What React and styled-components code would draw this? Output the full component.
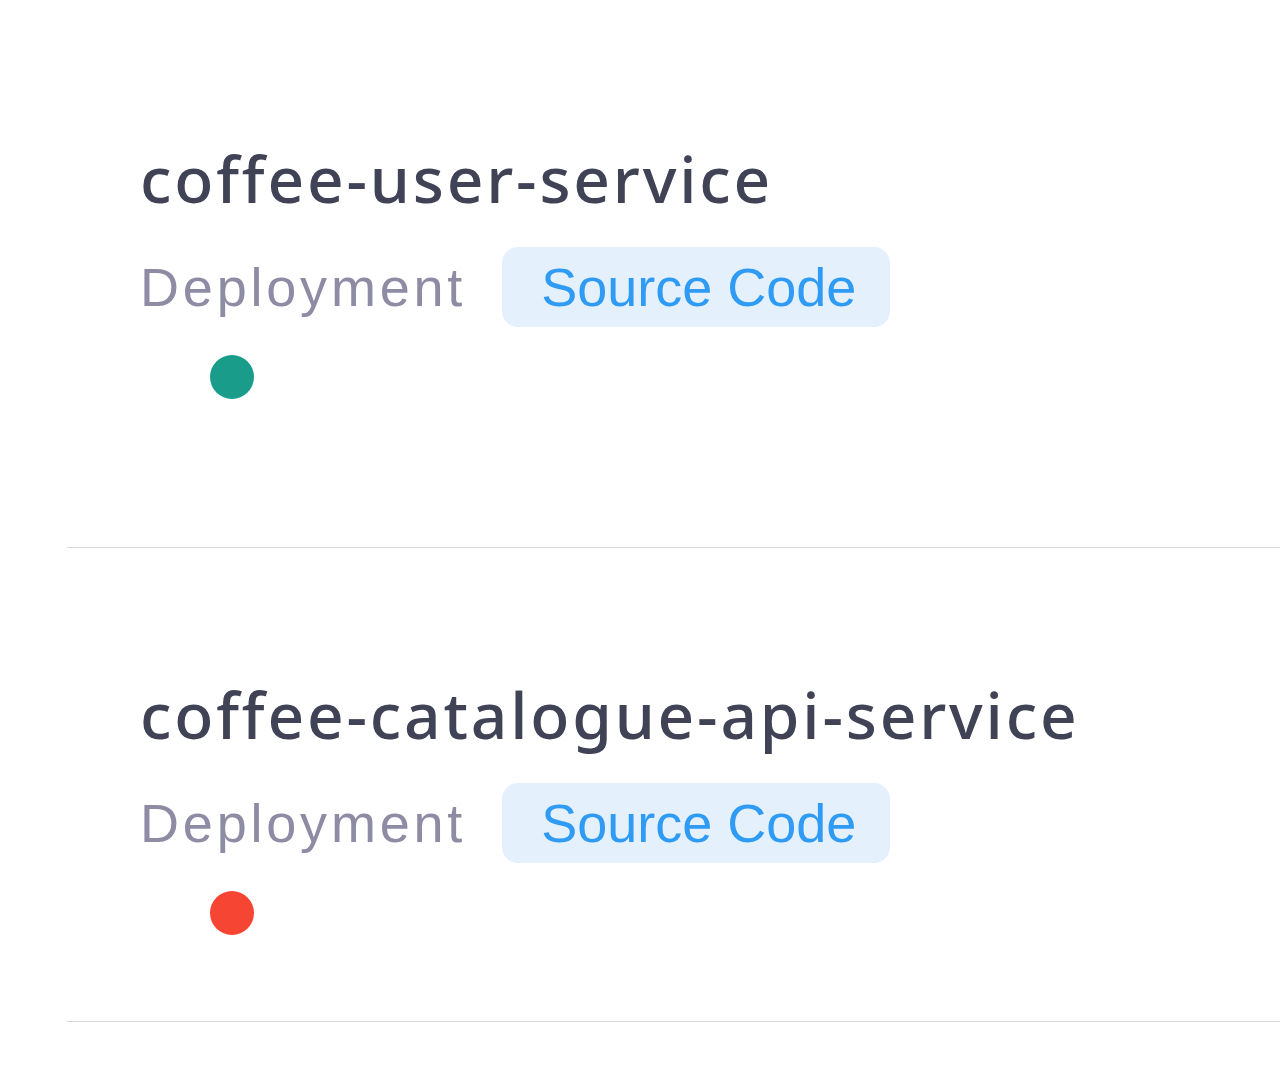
import React from "react";
import styled, { createGlobalStyle } from "styled-components";

const GlobalStyle = createGlobalStyle`
  body {
    margin: 0;
    background: #fff;
    font-family: "Noto Sans", "Liberation Sans", sans-serif;
  }
`;

const Page = styled.main`
  padding-top: 12px;
  padding-left: 67px;
  min-height: 1091px;
  box-sizing: border-box;
`;

const ServiceRow = styled.section`
  display: flex;
  flex-direction: column;
  padding: 131px 0 ${(p) => p.$tail}px 73px;
  border-bottom: 1.5px solid #d9d9dd;
`;

const Title = styled.h2`
  margin: 0;
  font-size: 64px;
  font-weight: 500;
  line-height: 72px;
  color: #3f4355;
  letter-spacing: 2.8px;
`;

const Links = styled.div`
  display: flex;
  align-items: center;
  gap: 36px;
  margin-top: 32px;
`;

const Deploy = styled.span`
  font-family: "Liberation Sans", Arial, sans-serif;
  font-size: 54px;
  color: #8e8ca4;
  letter-spacing: 3.8px;
`;

const SourceButton = styled.button`
  height: 80px;
  padding: 0 34px 0 39px;
  border: none;
  border-radius: 16px;
  background: #e4f1fd;
  color: #2f9bf4;
  font-family: "Liberation Sans", Arial, sans-serif;
  font-size: 54px;
  cursor: pointer;
`;

const StatusDot = styled.span`
  width: 44px;
  height: 44px;
  margin: 28px 0 0 70px;
  border-radius: 50%;
  background: ${(p) => p.$color};
`;

const services = [
  { name: "coffee-user-service", color: "#1a9c8a", tail: 148 },
  { name: "coffee-catalogue-api-service", color: "#f64533", tail: 86 },
];

export default function App() {
  return (
    <>
      <GlobalStyle />
      <Page>
        {services.map((s) => (
          <ServiceRow key={s.name} $tail={s.tail}>
            <Title>{s.name}</Title>
            <Links>
              <Deploy>Deployment</Deploy>
              <SourceButton>Source Code</SourceButton>
            </Links>
            <StatusDot $color={s.color} />
          </ServiceRow>
        ))}
      </Page>
    </>
  );
}
